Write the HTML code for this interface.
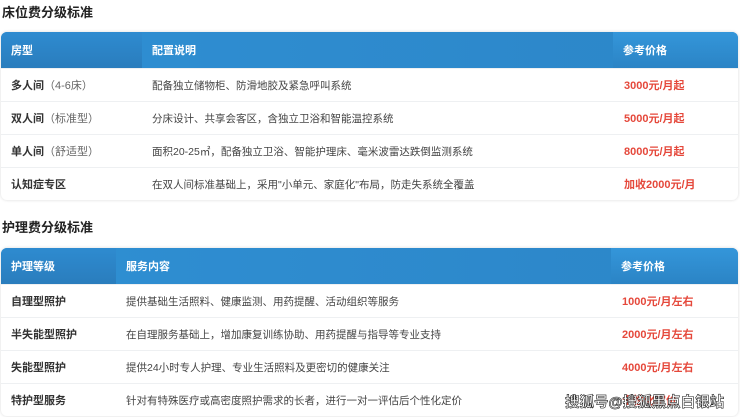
<!DOCTYPE html>
<html><head><meta charset="utf-8"><style>
*{margin:0;padding:0;box-sizing:border-box}
body{width:740px;height:417px;overflow:hidden;background:#fff;font-family:"Liberation Sans","Noto Sans CJK SC",sans-serif;color:#444;position:relative}
.t{position:absolute;left:2px;font-size:13px;font-weight:bold;color:#222}
.tb{position:absolute;left:1px;width:737px;border-radius:6px;overflow:hidden;box-shadow:0 0 3px rgba(0,0,0,.15);background:#fff}
.h{display:flex;height:36px;color:#fff;font-size:11px;font-weight:bold;align-items:center;background:linear-gradient(90deg,#2f8fd3,#2c86c8)}
.h div{height:100%;display:flex;align-items:center;padding-left:10px}
.h .c1{background:linear-gradient(180deg,#2e8bd0,#2a7dbd)}
.h .c3{background:linear-gradient(180deg,#3496da,#2b84c5)}
.r{display:flex;height:33px;align-items:center;font-size:10.5px;border-top:1px solid #eef0f2}
.r div{padding-left:10px}
.r .c1{font-weight:bold;font-size:11px;color:#333}
.r .c1 span{font-weight:normal;color:#666}
.r .c3{color:#e5483b;font-weight:bold;font-size:11px;padding-left:11px}
.wm{position:absolute;left:565px;top:391px;font-size:14.5px;color:#fff;font-weight:bold;-webkit-text-stroke:0.6px #222}
</style></head><body>
<div class="t" style="top:2px">床位费分级标准</div>
<div class="tb" style="top:32px">
<div class="h"><div class="c1" style="width:141px">房型</div><div style="width:471px">配置说明</div><div class="c3" style="width:125px">参考价格</div></div>
<div class="r"><div class="c1" style="width:141px">多人间<span>（4-6床）</span></div><div style="width:471px">配备独立储物柜、防滑地胶及紧急呼叫系统</div><div class="c3">3000元/月起</div></div>
<div class="r"><div class="c1" style="width:141px">双人间<span>（标准型）</span></div><div style="width:471px">分床设计、共享会客区，含独立卫浴和智能温控系统</div><div class="c3">5000元/月起</div></div>
<div class="r"><div class="c1" style="width:141px">单人间<span>（舒适型）</span></div><div style="width:471px">面积20-25㎡，配备独立卫浴、智能护理床、毫米波雷达跌倒监测系统</div><div class="c3">8000元/月起</div></div>
<div class="r"><div class="c1" style="width:141px">认知症专区</div><div style="width:471px">在双人间标准基础上，采用"小单元、家庭化"布局，防走失系统全覆盖</div><div class="c3">加收2000元/月</div></div>
</div>
<div class="t" style="top:217px">护理费分级标准</div>
<div class="tb" style="top:248px">
<div class="h"><div class="c1" style="width:115px">护理等级</div><div style="width:495px">服务内容</div><div class="c3" style="width:127px">参考价格</div></div>
<div class="r"><div class="c1" style="width:115px">自理型照护</div><div style="width:495px">提供基础生活照料、健康监测、用药提醒、活动组织等服务</div><div class="c3">1000元/月左右</div></div>
<div class="r"><div class="c1" style="width:115px">半失能型照护</div><div style="width:495px">在自理服务基础上，增加康复训练协助、用药提醒与指导等专业支持</div><div class="c3">2000元/月左右</div></div>
<div class="r"><div class="c1" style="width:115px">失能型照护</div><div style="width:495px">提供24小时专人护理、专业生活照料及更密切的健康关注</div><div class="c3">4000元/月左右</div></div>
<div class="r"><div class="c1" style="width:115px">特护型服务</div><div style="width:495px">针对有特殊医疗或高密度照护需求的长者，进行一对一评估后个性化定价</div><div class="c3">个性化定价</div></div>
</div>
<div class="wm">搜狐号@搜狐黑点白银站</div>
</body></html>
